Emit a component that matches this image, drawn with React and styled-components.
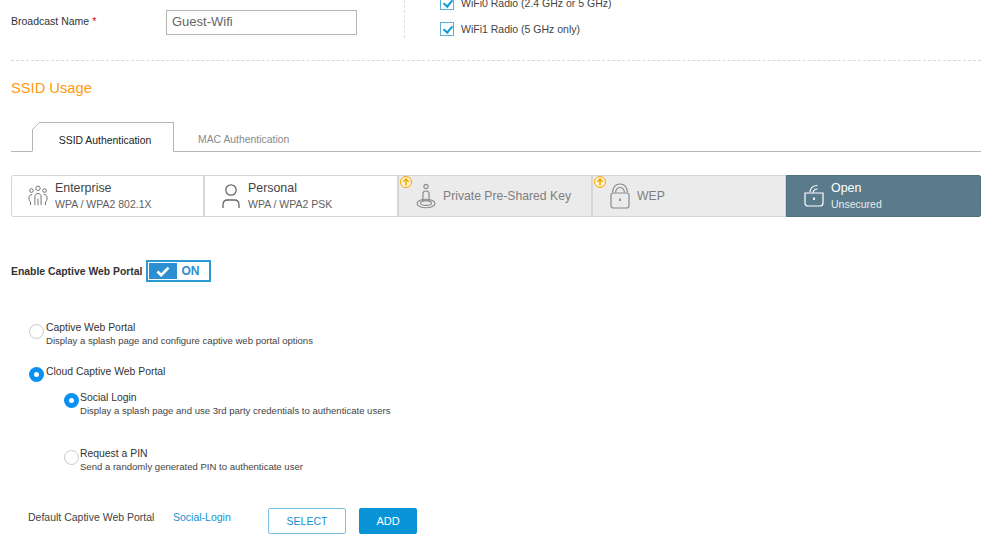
import React from "react";
import styled, { createGlobalStyle } from "styled-components";

const GlobalStyle = createGlobalStyle`
  html, body {
    margin: 0;
    padding: 0;
    background: #fff;
    font-family: "Liberation Sans", Arial, sans-serif;
    color: #333;
  }
  * { box-sizing: border-box; }
`;

const EnterpriseIcon = ({ color }) => (
  <svg width="20" height="24" viewBox="0 0 22 24" fill="none" stroke={color} strokeWidth="1">
    <circle cx="11" cy="3.5" r="2.4" />
    <circle cx="3.8" cy="6" r="2" />
    <circle cx="18.2" cy="6" r="2" />
    <path d="M7.6 22V13c0-2.4 1.4-3.8 3.4-3.8s3.4 1.4 3.4 3.8v9" />
    <path d="M11 15v7" />
    <path d="M4.6 10.2C2.4 10.400 1 12 1 14.200c0 2 .8 3.400 1.800 4.400V22" />
    <path d="M17.400 10.200c2.200.2 3.600 1.800 3.600 4 0 2-.8 3.400-1.800 4.400V22" />
  </svg>
);

const PersonalIcon = ({ color }) => (
  <svg width="18" height="24" viewBox="0 0 18 24" fill="none" stroke={color} strokeWidth="1.3">
    <circle cx="9" cy="6" r="5.2" />
    <path d="M1 24v-3c0-3 1.800-5 4.500-5h7c2.700 0 4.500 2 4.500 5v3" />
  </svg>
);

const KeyIcon = ({ color }) => (
  <svg width="20" height="26" viewBox="0 0 20 26" fill="none" stroke={color} strokeWidth="1.100">
    <circle cx="10" cy="3.500" r="2.100" />
    <path d="M7 19v-8.500c0-1.500 1-2.500 3-2.500s3 1 3 2.500V19" />
    <path d="M7 13h-.8M13 13h.8" />
    <ellipse cx="10" cy="20.500" rx="9" ry="4.200" />
    <ellipse cx="10" cy="20" rx="5.500" ry="2.400" />
  </svg>
);

const LockIcon = ({ color }) => (
  <svg width="20" height="26" viewBox="0 0 20 26" fill="none" stroke={color} strokeWidth="1.200">
    <path d="M2.500 9.500C3 4 6 1 10 1s7 3 7.500 8.500" />
    <path d="M5.500 9.500C6 6.500 7.500 4.500 10 4.500s4 2 4.500 5" />
    <rect x="1" y="10" width="18" height="15" rx="2.500" />
    <path d="M10 15.500v2.500" strokeWidth="1.800" />
  </svg>
);

const OpenLockIcon = ({ color }) => (
  <svg width="20" height="24" viewBox="0 0 20 24" fill="none" stroke={color} strokeWidth="1.200">
    <path d="M6 8C6.500 4 9 1.500 13.500 1.500" />
    <path d="M9 8.500C9.500 6.500 11 5 13.500 5" />
    <path d="M1 9h18v10c0 2-1 3-3 3H4c-2 0-3-1-3-3z" />
    <path d="M10 13.500v2.500" strokeWidth="1.800" />
  </svg>
);

const UpgradeBadge = () => (
  <Badge>
    <svg width="8" height="8" viewBox="0 0 8 8" fill="none" stroke="#f5a800" strokeWidth="1.500">
      <path d="M4 7.500V1M1.300 3.700 4 1l2.700 2.700" />
    </svg>
  </Badge>
);

const authTypes = [
  { name: "Enterprise", sub: "WPA / WPA2 802.1X", Icon: EnterpriseIcon, gap: 7, pad: 16 },
  { name: "Personal", sub: "WPA / WPA2 PSK", Icon: PersonalIcon, gap: 8, pad: 17 },
  { name: "Private Pre-Shared Key", Icon: KeyIcon, locked: true, gap: 7, pad: 17 },
  { name: "WEP", Icon: LockIcon, locked: true, gap: 7, pad: 17 },
  { name: "Open", sub: "Unsecured", Icon: OpenLockIcon, active: true, gap: 7, pad: 17 },
];

const iconColor = (type) => (type.active ? "#fff" : type.locked ? "#8a8a8a" : "#666");

const App = () => (
  <Page>
    <GlobalStyle />
    <TopRow>
      <FieldLabel>
        Broadcast Name <Required>*</Required>
      </FieldLabel>
      <TextInput defaultValue="Guest-Wifi" />
      <RadioChecks>
        <CheckRow>
          <CheckBox />
          WiFi0 Radio (2.4 GHz or 5 GHz)
        </CheckRow>
        <CheckRow>
          <CheckBox />
          WiFi1 Radio (5 GHz only)
        </CheckRow>
      </RadioChecks>
    </TopRow>

    <SectionTitle>SSID Usage</SectionTitle>

    <Tabs>
      <Tab $active>SSID Authentication</Tab>
      <Tab>MAC Authentication</Tab>
    </Tabs>

    <AuthCards>
      {authTypes.map((type) => (
        <AuthCard key={type.name} $locked={type.locked} $active={type.active} $gap={type.gap} $pad={type.pad}>
          {type.locked && <UpgradeBadge />}
          <type.Icon color={iconColor(type)} />
          <div>
            <AuthName $locked={type.locked}>{type.name}</AuthName>
            {type.sub && <AuthSub>{type.sub}</AuthSub>}
          </div>
        </AuthCard>
      ))}
    </AuthCards>

    <PortalToggle>
      <ToggleLabel>Enable Captive Web Portal</ToggleLabel>
      <Toggle>
        <ToggleKnob>
          <svg width="14" height="11" viewBox="0 0 15 12" fill="none" stroke="#fff" strokeWidth="3">
            <path d="M1.500 6 5.500 10 13.500 1.800" />
          </svg>
        </ToggleKnob>
        <ToggleText>ON</ToggleText>
      </Toggle>
    </PortalToggle>

    <Options>
      <Option $top={39} $gap={2}>
        <Radio />
        <div>
          <OptionName>Captive Web Portal</OptionName>
          <OptionHint>Display a splash page and configure captive web portal options</OptionHint>
        </div>
      </Option>
      <Option $top={18} $gap={2}>
        <Radio $on />
        <OptionName>Cloud Captive Web Portal</OptionName>
      </Option>
      <SubOptions>
        <Option $top={9} $gap={1}>
          <Radio $on />
          <div>
            <OptionName>Social Login</OptionName>
            <OptionHint>Display a splash page and use 3rd party credentials to authenticate users</OptionHint>
          </div>
        </Option>
        <Option $top={30} $gap={1}>
          <Radio />
          <div>
            <OptionName>Request a PIN</OptionName>
            <OptionHint>Send a randomly generated PIN to authenticate user</OptionHint>
          </div>
        </Option>
      </SubOptions>
    </Options>

    <DefaultPortal>
      <DefaultLabel>Default Captive Web Portal</DefaultLabel>
      <PortalLink>Social-Login</PortalLink>
      <OutlineButton>SELECT</OutlineButton>
      <SolidButton>ADD</SolidButton>
    </DefaultPortal>
  </Page>
);

export default App;

const Page = styled.div`
  width: 999px;
  height: 546px;
  overflow: hidden;
  padding: 0 18px 0 11px;
`;

const TopRow = styled.div`
  display: flex;
  align-items: flex-start;
  height: 61px;
  padding-top: 10px;
  border-bottom: 1px dashed #d8d8d8;
`;

const FieldLabel = styled.label`
  width: 155px;
  font-size: 10.5px;
  line-height: 22px;
  color: #333;
`;

const Required = styled.span`
  color: #d0021b;
`;

const TextInput = styled.input`
  width: 191px;
  height: 25px;
  padding: 0 5px 3px;
  border: 1px solid #b5b5b5;
  border-radius: 0;
  outline: none;
  font-family: inherit;
  font-size: 13px;
  color: #666;
`;

const RadioChecks = styled.div`
  display: flex;
  flex-direction: column;
  gap: 12px;
  height: 38px;
  margin: -10px 0 0 47px;
  padding-left: 35px;
  border-left: 1px dashed #e0e0e0;
`;

const CheckRow = styled.div`
  display: flex;
  align-items: center;
  gap: 7px;
  height: 14px;
  font-size: 10.5px;
  color: #444;

  &:first-child {
    margin-top: -4px;
  }
`;

const CheckBox = styled.span`
  position: relative;
  width: 14px;
  height: 14px;
  border: 1px solid #5aafe0;
  background: #fff;

  &::after {
    content: "";
    position: absolute;
    left: 3.500px;
    top: 1px;
    width: 4px;
    height: 7px;
    border: solid #0f9bd7;
    border-width: 0 2px 2px 0;
    transform: rotate(40deg);
  }
`;

const SectionTitle = styled.h2`
  margin: 17px 0 0;
  font-size: 14.7px;
  font-weight: 400;
  line-height: 20px;
  color: #ff9a0d;
`;

const Tabs = styled.div`
  display: flex;
  height: 30px;
  margin-top: 24px;
  padding-left: 21px;
  border-bottom: 1px solid #b5b5b5;
`;

const Tab = styled.div`
  position: relative;
  width: ${(p) => (p.$active ? "142px" : "auto")};
  height: ${(p) => (p.$active ? "30px" : "29px")};
  margin-left: ${(p) => (p.$active ? "0" : "24px")};
  padding-left: ${(p) => (p.$active ? "4px" : "0")};
  font-size: 10.4px;
  text-align: center;
  line-height: 35px;
  color: ${(p) => (p.$active ? "#222" : "#8a8a8a")};
  background: ${(p) => (p.$active ? "#fff" : "transparent")};
  border: ${(p) => (p.$active ? "1px solid #b5b5b5" : "none")};
  border-bottom: ${(p) => (p.$active ? "1px solid #fff" : "none")};

  &::before {
    content: ${(p) => (p.$active ? '""' : "none")};
    position: absolute;
    left: -1px;
    top: -1px;
    width: 8px;
    height: 8px;
    background: linear-gradient(135deg, #fff 47%, #b5b5b5 47%, #b5b5b5 56%, transparent 56%);
  }
`;

const AuthCards = styled.div`
  display: grid;
  grid-template-columns: 193px 194px 194px 194px 195px;
  height: 42px;
  margin-top: 23px;
`;

const AuthCard = styled.div`
  position: relative;
  display: flex;
  align-items: center;
  gap: ${(p) => p.$gap}px;
  padding-left: ${(p) => p.$pad}px;
  border: 1px solid ${(p) => (p.$active ? "#4d7284" : "#d6d6d6")};
  background: ${(p) => (p.$active ? "#5a7b8c" : p.$locked ? "#ebebeb" : "#fff")};
  color: ${(p) => (p.$active ? "#fff" : p.$locked ? "#7f7f7f" : "#444")};
  border-radius: ${(p) => (p.$active ? "0 2px 2px 0" : "0")};

  &:first-child {
    border-radius: 2px 0 0 2px;
  }
`;

const Badge = styled.span`
  position: absolute;
  left: 1px;
  top: 0;
  display: flex;
  align-items: center;
  justify-content: center;
  width: 12px;
  height: 12px;
  border: 1.5px solid #f5a800;
  border-radius: 50%;
  background: #fff3d0;
`;

const AuthName = styled.div`
  font-size: ${(p) => (p.$locked ? "12.2px" : "12.4px")};
  line-height: 15px;
`;

const AuthSub = styled.div`
  margin-top: 2px;
  font-size: 10.5px;
  line-height: 13px;
  opacity: 0.85;
`;

const PortalToggle = styled.div`
  display: flex;
  align-items: center;
  gap: 4px;
  height: 22px;
  margin-top: 43px;
`;

const ToggleLabel = styled.span`
  font-size: 10.4px;
  font-weight: 700;
  color: #333;
`;

const Toggle = styled.div`
  display: flex;
  align-items: center;
  width: 65px;
  height: 22px;
  padding: 0 1px;
  border: 2px solid #2a9ad6;
`;

const ToggleKnob = styled.span`
  display: flex;
  align-items: center;
  justify-content: center;
  width: 28px;
  height: 16px;
  background: #2b8fd0;
`;

const ToggleText = styled.span`
  margin-left: 4px;
  font-size: 12px;
  font-weight: 700;
  color: #2b8fd0;
`;

const Options = styled.div`
  padding-left: 18px;
`;

const SubOptions = styled.div`
  padding-left: 35px;
`;

const Option = styled.div`
  display: flex;
  align-items: flex-start;
  gap: ${(p) => p.$gap}px;
  margin-top: ${(p) => p.$top}px;
`;

const Radio = styled.span`
  position: relative;
  flex: none;
  width: 15px;
  height: 15px;
  margin-top: ${(p) => (p.$on ? "2px" : "3px")};
  border-radius: 50%;
  border: ${(p) => (p.$on ? "none" : "1px solid #c8c8c8")};
  background: ${(p) => (p.$on ? "#0a90f0" : "#fff")};

  &::after {
    content: ${(p) => (p.$on ? '""' : "none")};
    position: absolute;
    left: 5px;
    top: 5px;
    width: 5px;
    height: 5px;
    border-radius: 50%;
    background: #fff;
  }
`;

const OptionName = styled.div`
  font-size: 10.4px;
  line-height: 13px;
  color: #333;
`;

const OptionHint = styled.div`
  font-size: 9.55px;
  line-height: 13px;
  color: #444;
`;

const DefaultPortal = styled.div`
  display: flex;
  align-items: center;
  height: 26px;
  margin-top: 35px;
  padding-left: 17px;
`;

const DefaultLabel = styled.span`
  width: 145px;
  margin-top: -8px;
  font-size: 10.5px;
  color: #444;
`;

const PortalLink = styled.a`
  width: 95px;
  margin-top: -8px;
  font-size: 10.5px;
  color: #1491d2;
`;

const OutlineButton = styled.button`
  width: 78px;
  height: 26px;
  border: 1px solid #7cc0e6;
  border-radius: 2px;
  background: #fff;
  font-family: inherit;
  font-size: 10.5px;
  color: #1491d2;
`;

const SolidButton = styled.button`
  width: 58px;
  height: 26px;
  margin-left: 13px;
  border: none;
  border-radius: 2px;
  background: #0a94d8;
  font-family: inherit;
  font-size: 11px;
  color: #fff;
`;
